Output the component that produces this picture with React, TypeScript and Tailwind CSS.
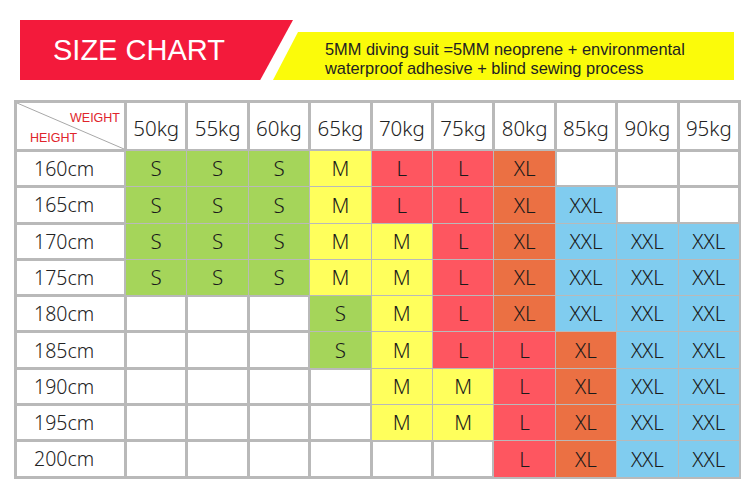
import React from 'react'

type Size = '' | 'S' | 'M' | 'L' | 'XL' | 'XXL'

const WEIGHTS = ['50kg', '55kg', '60kg', '65kg', '70kg', '75kg', '80kg', '85kg', '90kg', '95kg']

const ROWS: { height: string; sizes: Size[] }[] = [
  { height: '160cm', sizes: ['S', 'S', 'S', 'M', 'L', 'L', 'XL', '', '', ''] },
  { height: '165cm', sizes: ['S', 'S', 'S', 'M', 'L', 'L', 'XL', 'XXL', '', ''] },
  { height: '170cm', sizes: ['S', 'S', 'S', 'M', 'M', 'L', 'XL', 'XXL', 'XXL', 'XXL'] },
  { height: '175cm', sizes: ['S', 'S', 'S', 'M', 'M', 'L', 'XL', 'XXL', 'XXL', 'XXL'] },
  { height: '180cm', sizes: ['', '', '', 'S', 'M', 'L', 'XL', 'XXL', 'XXL', 'XXL'] },
  { height: '185cm', sizes: ['', '', '', 'S', 'M', 'L', 'L', 'XL', 'XXL', 'XXL'] },
  { height: '190cm', sizes: ['', '', '', '', 'M', 'M', 'L', 'XL', 'XXL', 'XXL'] },
  { height: '195cm', sizes: ['', '', '', '', 'M', 'M', 'L', 'XL', 'XXL', 'XXL'] },
  { height: '200cm', sizes: ['', '', '', '', '', '', 'L', 'XL', 'XXL', 'XXL'] },
]

// colour per size, spread 1px into the grid gap so coloured blocks read as one
const SIZE_STYLE: Record<Size, string> = {
  '': 'bg-white',
  S: 'bg-[#a5d55a] shadow-[0_0_0_1px_#a5d55a]',
  M: 'bg-[#ffff5c] shadow-[0_0_0_1px_#ffff5c]',
  L: 'bg-[#fe5660] shadow-[0_0_0_1px_#fe5660]',
  XL: 'bg-[#eb7043] shadow-[0_0_0_1px_#eb7043]',
  XXL: 'bg-[#80ccef] shadow-[0_0_0_1px_#80ccef]',
}

export default function App() {
  return (
    <main className="w-[750px] h-[502px] bg-white overflow-hidden font-['Noto_Sans',sans-serif] font-light">
      {/* banner */}
      <header className="flex items-start pt-5 pl-5">
        <div className="w-[273px] h-[60px] bg-[#f31a3b] [clip-path:polygon(0_0,100%_0,88%_100%,0_100%)] flex items-center pl-[33px]">
          <span className="text-white text-[29px] leading-none font-normal font-['Liberation_Sans',Arial,sans-serif]">SIZE CHART</span>
        </div>
        <div className="-ml-5 mt-3 w-[461px] h-12 bg-[#fbfb0a] [clip-path:polygon(25px_0,100%_0,100%_100%,0_100%)] pl-[52px] pt-[8px]">
          <p className="text-[16.4px] leading-[19px] font-normal text-[#222] font-['Liberation_Sans',Arial,sans-serif]">
            5MM diving suit =5MM neoprene + environmental
            <br />
            waterproof adhesive + blind sewing process
          </p>
        </div>
      </header>

      {/* chart */}
      <section className="ml-[14px] mt-5 w-[727px] bg-[#b9b9b9] p-[3px] grid grid-cols-[107px_repeat(10,1fr)] grid-rows-[46px_repeat(9,33.3px)] gap-[3px]">
        <div className="relative bg-white">
          <svg className="absolute inset-0 w-full h-full" viewBox="0 0 107 46" preserveAspectRatio="none">
            <line x1="0" y1="0" x2="107" y2="46" stroke="#a8a8a8" strokeWidth="1" />
          </svg>
          <span className="absolute right-[4px] top-[9px] text-[12.5px] leading-none font-normal text-[#e0242b] font-['Liberation_Sans',Arial,sans-serif]">WEIGHT</span>
          <span className="absolute left-[13px] top-[29px] text-[12.5px] leading-none font-normal text-[#e0242b] font-['Liberation_Sans',Arial,sans-serif]">HEIGHT</span>
        </div>
        {WEIGHTS.map((w) => (
          <div key={w} className="bg-white flex items-center justify-center pt-1 text-[20.5px] text-[#222]">
            {w}
          </div>
        ))}

        {ROWS.map((r) => (
          <React.Fragment key={r.height}>
            <div className="bg-white flex items-center pl-[17px] text-[19.5px] text-[#222]">{r.height}</div>
            {r.sizes.map((s, i) => (
              <div
                key={i}
                className={`flex items-center justify-center text-[20.5px] text-[#1a1a1a] ${SIZE_STYLE[s]}`}
              >
                {s}
              </div>
            ))}
          </React.Fragment>
        ))}
      </section>
    </main>
  )
}
